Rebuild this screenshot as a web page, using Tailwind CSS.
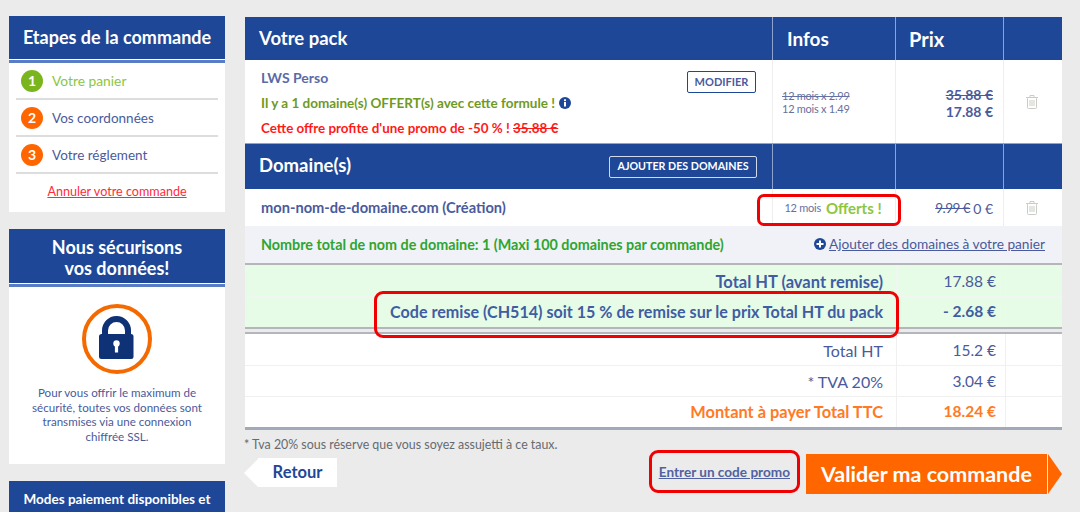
<!DOCTYPE html>
<html lang="fr">
<head>
<meta charset="UTF-8">
<title>Votre pack</title>
<script src="https://cdn.jsdelivr.net/npm/@tailwindcss/browser@4"></script>
</head>
<body class="bg-[#ebebeb] font-['Lato',sans-serif] h-[512px] w-[1080px] overflow-hidden text-[#4a5a9c]">
<div class="flex items-start pt-[16px] pl-[9px] gap-[20px] h-[512px] overflow-hidden">

  <!-- Sidebar -->
  <aside class="w-[216px] shrink-0 flex flex-col gap-[17px]">
    <div class="bg-white h-[196px]">
      <div class="bg-[#1e4798] h-[43px] flex items-center justify-center text-white text-[18px] font-bold">Etapes de la commande</div>
      <div class="h-[3px] mt-[1px] bg-[#5a7cc4]"></div>
      <div class="px-[7px]">
        <div class="h-[37px] flex items-center gap-[9px] border-b-2 border-[#dddddd] pl-[5px]">
          <span class="w-[22px] h-[22px] rounded-full bg-[#7ab51d] text-white text-[14px] font-bold flex items-center justify-center">1</span>
          <span class="text-[13.8px] text-[#8cc63f] pt-[2px]">Votre panier</span>
        </div>
        <div class="h-[37px] flex items-center gap-[9px] border-b-2 border-[#dddddd] pl-[5px]">
          <span class="w-[22px] h-[22px] rounded-full bg-[#ff6600] text-white text-[14px] font-bold flex items-center justify-center">2</span>
          <span class="text-[13.5px] pt-[2px]">Vos coordonnées</span>
        </div>
        <div class="h-[37px] flex items-center gap-[9px] border-b-2 border-[#dddddd] pl-[5px]">
          <span class="w-[22px] h-[22px] rounded-full bg-[#ff6600] text-white text-[14px] font-bold flex items-center justify-center">3</span>
          <span class="text-[13.5px] pt-[2px]">Votre réglement</span>
        </div>
        <div class="text-center text-[12.6px] text-[#ff2b3a] underline pt-[9px]">Annuler votre commande</div>
      </div>
    </div>

    <div class="bg-white h-[235px]">
      <div class="bg-[#1e4798] h-[54px] flex items-center justify-center text-center text-white text-[18px] leading-[21px] pt-[3px] font-bold">Nous sécurisons<br>vos données!</div>
      <div class="h-[3px] mt-[1px] bg-[#5a7cc4]"></div>
      <div class="flex justify-center pt-[16px]">
        <svg width="72" height="72" viewBox="0 0 72 72">
          <circle cx="36" cy="36" r="33" fill="#fff" stroke="#f56a00" stroke-width="4"/>
          <path d="M24 33V27.500a11.500 11.500 0 0 1 23 0V33" fill="none" stroke="#0f3175" stroke-width="6"/>
          <rect x="18" y="31" width="34.500" height="25" rx="2.500" fill="#0f3175"/>
          <circle cx="35.500" cy="40.500" r="3.200" fill="#fff"/>
          <rect x="33.900" y="41" width="3.200" height="8.500" fill="#fff"/>
        </svg>
      </div>
      <p class="text-center text-[11.6px] leading-[14.6px] mt-[11px] px-[16px]">Pour vous offrir le maximum de sécurité, toutes vos données sont transmises via une connexion chiffrée SSL.</p>
    </div>

    <div class="bg-[#1e4798] h-[31px] text-center text-white text-[13.5px] leading-[18px] font-bold pt-[9px]">Modes paiement disponibles et</div>
  </aside>

  <!-- Main -->
  <main class="w-[818px] shrink-0 relative mt-[1px]">
    <div class="grid grid-cols-[527px_123px_108px_59px] bg-[#1e4798] text-white h-[43px] text-[19px] font-bold items-stretch w-[817px]">
      <div class="flex items-center pl-[14px] text-[18.5px] pt-[1px]">Votre pack</div>
      <div class="flex items-center pl-[14px] border-l border-[#8fa3cf] pt-[1px]">Infos</div>
      <div class="flex items-center pl-[13px] border-l border-[#8fa3cf] text-[20px]">Prix</div>
      <div class="border-l border-[#8fa3cf]"></div>
    </div>

    <div class="grid grid-cols-[527px_123px_108px_59px] bg-white h-[83px] w-[817px]">
      <div class="pl-[16px] pr-[15px] relative">
        <div class="text-[14px] font-bold mt-[9px] leading-[18px] opacity-90">LWS Perso</div>
        <div class="flex items-center gap-[4px] text-[13.5px] font-bold text-[#6f9a1e] mt-[7px] leading-[18px]">
          <span>Il y a 1 domaine(s) OFFERT(s) avec cette formule !</span>
          <svg width="12" height="12" viewBox="0 0 12 12"><circle cx="6" cy="6" r="6" fill="#1e4798"/><rect x="5" y="5" width="2" height="4.500" fill="#fff"/><rect x="5" y="2.300" width="2" height="1.800" fill="#fff"/></svg>
        </div>
        <div class="text-[13.4px] font-bold text-[#ff1a1a] mt-[7px] leading-[18px]">Cette offre profite d'une promo de -50 % ! <s>35.88 €</s></div>
        <span class="absolute right-[16px] top-[11px] border border-[#1e4798] rounded-[2px] h-[22px] w-[69px] flex items-center justify-center text-[11px] font-bold">MODIFIER</span>
      </div>
      <div class="border-l border-[#eeeeee] pl-[9px] pt-[29px] text-[11px] tracking-[-0.25px] leading-[13px] text-[#66719f]">
        <div class="line-through">12 mois x 2.99</div>
        <div>12 mois x 1.49</div>
      </div>
      <div class="border-l border-[#eeeeee] pr-[10px] pt-[26px] text-right text-[14px] leading-[17px] font-bold">
        <div class="line-through">35.88 €</div>
        <div>17.88 €</div>
      </div>
      <div class="border-l border-[#eeeeee] flex items-center justify-center pr-[2px]">
        <svg width="12" height="14" viewBox="0 0 12 14" fill="none" stroke="#c9cdc6" stroke-width="1"><path d="M0 2.500h12M4 2.500V.5h4v2"/><rect x="1.500" y="2.500" width="9" height="11" rx="1"/><path d="M4 5v6M6 5v6M8 5v6"/></svg>
      </div>
    </div>

    <div class="grid grid-cols-[527px_123px_108px_59px] bg-[#1e4798] h-[46px] w-[817px] border-t border-[#8fa3cf]">
      <div class="flex items-center justify-between pl-[14px] pr-[15px] text-white text-[18.5px] font-bold">
        <span class="-mt-[2px]">Domaine(s)</span>
        <span class="border border-white/80 rounded-[2px] h-[22px] w-[148px] flex items-center justify-center text-[10.7px]">AJOUTER DES DOMAINES</span>
      </div>
      <div class="border-l border-[#8fa3cf]"></div>
      <div class="border-l border-[#8fa3cf]"></div>
      <div class="border-l border-[#8fa3cf]"></div>
    </div>

    <div class="grid grid-cols-[527px_123px_108px_59px] bg-white h-[37px] w-[817px] items-stretch">
      <div class="flex items-center pl-[16px] text-[14.65px] font-bold">mon-nom-de-domaine.com (Création)</div>
      <div class="border-l border-[#eeeeee] flex items-center justify-center gap-[5px] pr-[2px] pt-[1px]">
        <span class="text-[11px] tracking-[-0.25px] text-[#66719f]">12 mois</span>
        <span class="text-[15px] font-bold text-[#8cc63f]">Offerts !</span>
      </div>
      <div class="border-l border-[#eeeeee] flex items-center justify-end pr-[10px] gap-[3px] text-[14px] pt-[1px]"><s class="text-[13.5px] tracking-[-0.5px]">9.99 €</s><span>0 €</span></div>
      <div class="border-l border-[#eeeeee] flex items-center justify-center pr-[2px]">
        <svg width="12" height="14" viewBox="0 0 12 14" fill="none" stroke="#c9cdc6" stroke-width="1"><path d="M0 2.500h12M4 2.500V.5h4v2"/><rect x="1.500" y="2.500" width="9" height="11" rx="1"/><path d="M4 5v6M6 5v6M8 5v6"/></svg>
      </div>
    </div>

    <div class="bg-[#f0f2f7] h-[37px] w-[817px] flex items-center justify-between pl-[16px] pr-[17px]">
      <span class="text-[14.33px] font-bold text-[#2fa52f] pt-[1px]">Nombre total de nom de domaine: 1 (Maxi 100 domaines par commande)</span>
      <span class="flex items-center gap-[3px] text-[13.7px]">
        <svg width="12" height="12" viewBox="0 0 12 12"><circle cx="6" cy="6" r="6" fill="#1e4798"/><rect x="2.500" y="5" width="7" height="2" fill="#fff"/><rect x="5" y="2.500" width="2" height="7" fill="#fff"/></svg>
        <span class="underline">Ajouter des domaines à votre panier</span>
      </span>
    </div>

    <div class="border-t-2 border-[#b4b6bb] w-[817px]">
      <div class="grid grid-cols-[651px_109px_57px] bg-[#e6fce6] h-[31px] font-bold">
        <div class="flex items-center justify-end pr-[13px] pt-[4px] text-[16.5px] text-[#3f5da3]">Total HT (avant remise)</div>
        <div class="flex items-center justify-end pr-[9px] pt-[3px] border-l border-[#f2f6f2] text-[15.5px] font-normal">17.88 €</div>
        <div class="border-l border-[#f2f6f2]"></div>
      </div>
      <div class="grid grid-cols-[651px_109px_57px] bg-[#e6fce6] h-[31px] font-bold border-t border-[#f2f6f2]">
        <div class="flex items-center justify-end pr-[13px] text-[16.1px] text-[#3f5da3]">Code remise (CH514) soit 15 % de remise sur le prix Total HT du pack</div>
        <div class="flex items-center justify-end pr-[9px] border-l border-[#f2f6f2] text-[15.5px] text-[#3f5da3]">- 2.68 €</div>
        <div class="border-l border-[#f2f6f2]"></div>
      </div>
    </div>

    <div class="border-t-2 border-[#b4b6bb] w-[817px] pb-[3px]"></div>
    <div class="border-t-2 border-[#b4b6bb] w-[817px]">
      <div class="grid grid-cols-[651px_109px_57px] bg-white h-[31px]">
        <div class="flex items-center justify-end pr-[13px] pt-[2px] text-[16px]">Total HT</div>
        <div class="flex items-center justify-end pr-[9px] pt-[2px] border-l border-[#f0f0f0] text-[15.5px]">15.2 €</div>
        <div class="border-l border-[#f0f0f0]"></div>
      </div>
      <div class="grid grid-cols-[651px_109px_57px] bg-white h-[31px] border-t border-[#f0f0f0]">
        <div class="flex items-center justify-end pr-[13px] pt-[2px] text-[16px]">* TVA 20%</div>
        <div class="flex items-center justify-end pr-[9px] pt-[2px] border-l border-[#f0f0f0] text-[15.5px]">3.04 €</div>
        <div class="border-l border-[#f0f0f0]"></div>
      </div>
      <div class="grid grid-cols-[651px_109px_57px] bg-white h-[31px] font-bold text-[#ff7a26] border-t border-[#f0f0f0]">
        <div class="flex items-center justify-end pr-[13px] text-[16.4px]">Montant à payer Total TTC</div>
        <div class="flex items-center justify-end pr-[9px] border-l border-[#f0f0f0] text-[15.5px]">18.24 €</div>
        <div class="border-l border-[#f0f0f0]"></div>
      </div>
    </div>
    <div class="border-t-[3px] border-[#a4a9ba] w-[817px]"></div>

    <div class="text-[12.4px] text-[#666a70] mt-[7px] leading-[16px] -ml-[1px]">* Tva 20% sous réserve que vous soyez assujetti à ce taux.</div>

    <div class="flex items-start mt-[1px] w-[817px] h-[40px]">
      <div class="flex items-center mt-[4px] -ml-[1px]">
        <span class="w-0 h-0 border-y-[14px] border-y-transparent border-r-[14px] border-r-white"></span>
        <span class="bg-white h-[29px] w-[79px] flex items-center justify-center text-[16.5px] font-bold text-[#1e4798]">Retour</span>
      </div>
      <span class="ml-auto mr-[16px] mt-[8px] text-[13.6px] font-bold underline opacity-95">Entrer un code promo</span>
      <div class="flex items-center">
        <span class="bg-[#ff6600] h-[40px] w-[241px] flex items-center justify-center text-white text-[21.5px] font-bold">Valider ma commande</span>
        <span class="w-0 h-0 border-y-[20px] border-y-transparent border-l-[14px] border-l-[#ff6600] ml-[1px]"></span>
      </div>
    </div>

    <!-- red highlight boxes -->
    <div class="absolute left-[512px] top-[177px] w-[144px] h-[32px] border-[3px] border-[#f00000] rounded-[7px]"></div>
    <div class="absolute left-[129px] top-[274px] w-[525px] h-[47px] border-[3px] border-[#f00000] rounded-[9px]"></div>
    <div class="absolute left-[404px] top-[433px] w-[151px] h-[43px] border-[3px] border-[#f00000] rounded-[9px]"></div>
  </main>
</div>
</body>
</html>
